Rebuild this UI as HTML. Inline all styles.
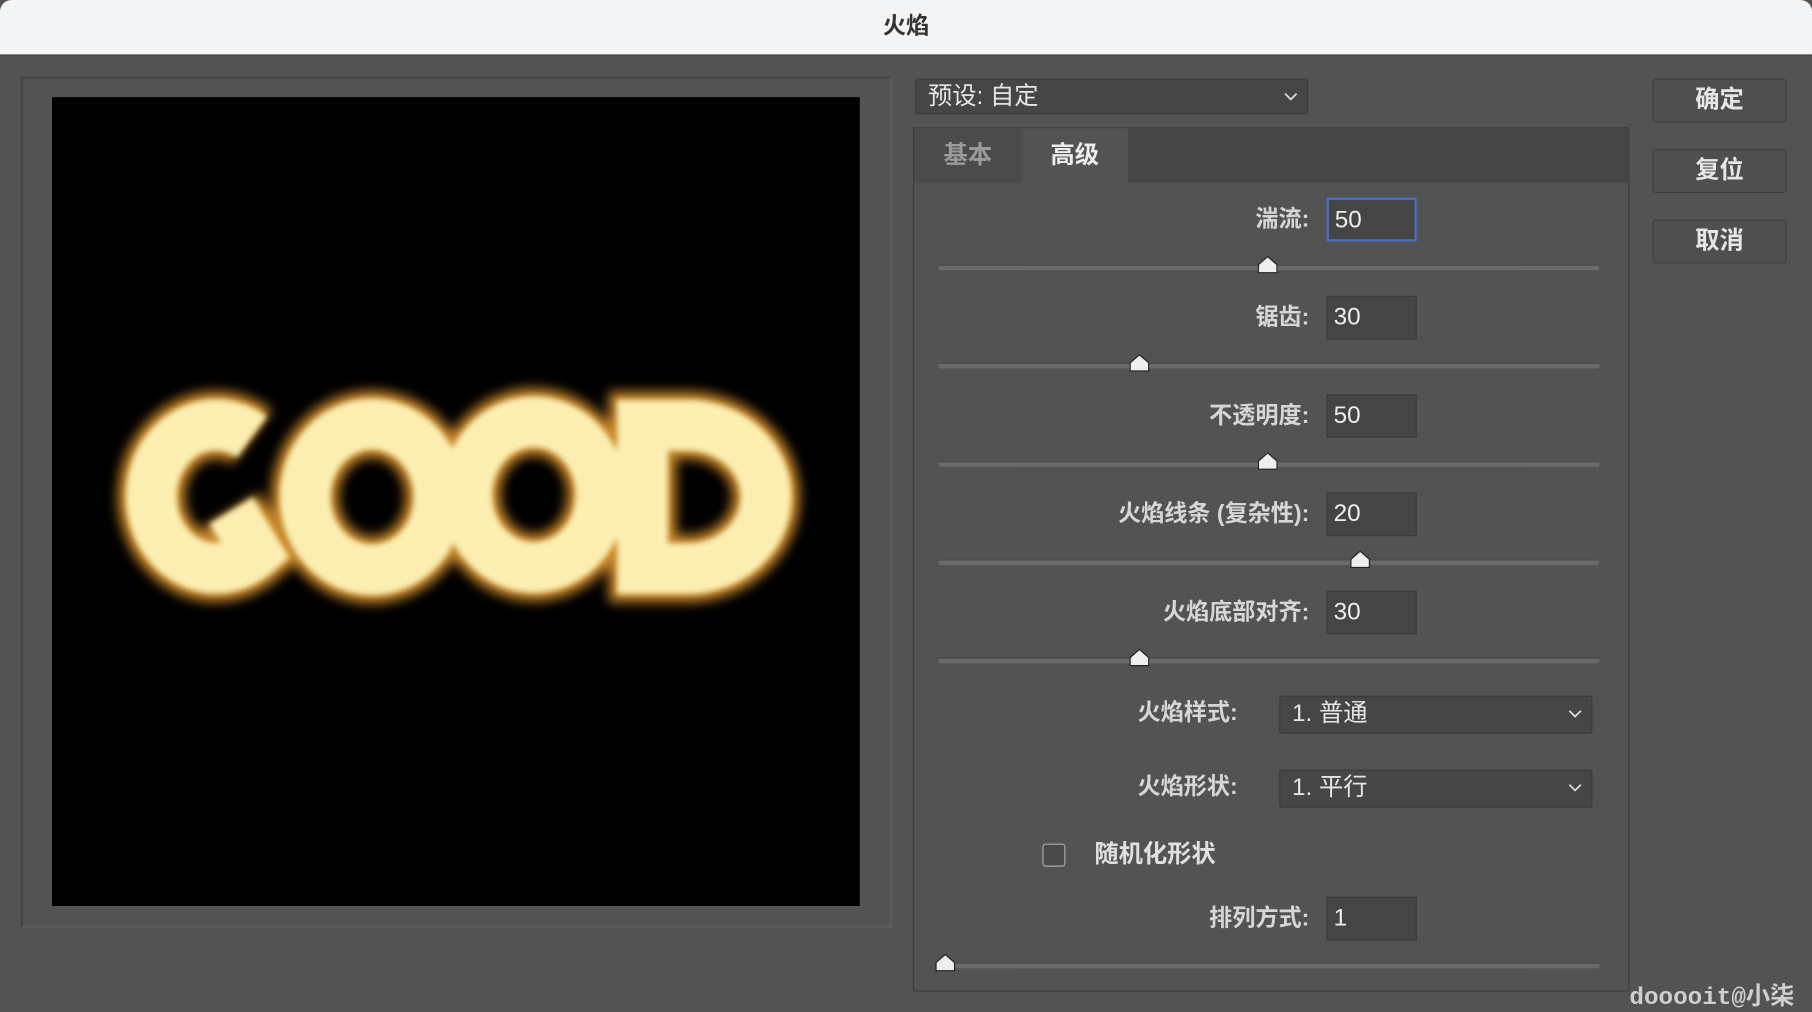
<!DOCTYPE html>
<html><head><meta charset="utf-8"><style>
html,body{margin:0;padding:0;width:1812px;height:1012px;overflow:hidden;background:#535353}
#w{position:absolute;left:0;top:0;width:1568px;height:876px;transform:scale(1.15561);transform-origin:0 0;background:#535353;font-family:"Liberation Sans","Noto Sans CJK SC",sans-serif;color:#d8d8d8}
.a{position:absolute;box-sizing:border-box}
.tb{left:0;top:0;width:1568px;height:48px;background:#f3f4f6;border-radius:10px 10px 0 0;border-bottom:1px solid #3a3a3a;text-align:center;line-height:46px;font-size:20px;font-weight:bold;color:#333}
.lbl{font-size:20px;text-align:right;color:#d6d6d6;line-height:38px;font-weight:bold}
.inp{width:78px;height:38px;background:#454545;border:1px solid #3c3c3c;font-size:21px;color:#eee;padding-left:5px;line-height:36px}
.trk{left:812px;width:572px;height:5px;background:#6a6a6a;border-radius:2px;border-top:1px solid #4a4a4a}
.th{width:0;height:0}
.th svg{position:absolute;left:-9px;top:-10px}
.btn{left:1430px;width:116px;height:38px;background:#4f4f4f;border:1px solid #3f3f3f;border-radius:3px;text-align:center;line-height:36px;font-size:21px;font-weight:bold;color:#e6e6e6}
.dd{background:#464646;border:1px solid #3a3a3a;border-radius:2px;font-size:21px;color:#e6e6e6;padding-left:10px;line-height:30px}
.dd svg{position:absolute;right:8px;top:11px}
</style></head><body><div id="w">
<div class="a tb">火焰</div>
<div class="a" style="left:18px;top:66px;width:754px;height:737px;border:2px solid #444;border-bottom-color:#5c5c5c;border-right-color:#5c5c5c"></div>
<div class="a" style="left:45px;top:84px;width:699px;height:700px;background:#000">
<svg width="699" height="700" viewBox="45 84 699 700">
<defs><filter id="b" x="-50%" y="-50%" width="200%" height="200%"><feGaussianBlur stdDeviation="5"/></filter><filter id="b2" x="-50%" y="-50%" width="200%" height="200%"><feGaussianBlur stdDeviation="2.5"/></filter></defs>
<g filter="url(#b)" fill="none" stroke="#c8862a" stroke-width="58">
<path d="M218 378 A56 62 0 1 0 222 478 L200 442"/>
<ellipse cx="322" cy="430" rx="58" ry="63"/>
<ellipse cx="462" cy="428" rx="58" ry="63"/>
<path d="M556 368 L595 368 A68 62 0 0 1 595 492 L556 492 Z"/>
</g>
<g filter="url(#b2)" fill="none" stroke="#fbeeb0" stroke-width="44">
<path d="M218 378 A56 62 0 1 0 222 478 L200 442"/>
<ellipse cx="322" cy="430" rx="58" ry="63"/>
<ellipse cx="462" cy="428" rx="58" ry="63"/>
<path d="M556 368 L595 368 A68 62 0 0 1 595 492 L556 492 Z"/>
</g>
</svg></div>
<div class="a dd" style="left:792px;top:68px;width:340px;height:31px">预设: 自定<svg width="12" height="8"><path d="M1 1L6 6 11 1" stroke="#ddd" stroke-width="1.5" fill="none"/></svg></div>
<div class="a" style="left:790px;top:110px;width:620px;height:748px;background:#535353;border:1px solid #3e3e3e"></div>
<div class="a" style="left:791px;top:111px;width:618px;height:47px;background:#464646"></div>
<div class="a" style="left:791px;top:111px;width:93px;height:47px;background:#4b4b4b;font-size:21px;color:#9a9a9a;text-align:center;line-height:47px;font-weight:bold">基本</div>
<div class="a" style="left:884px;top:111px;width:92px;height:48px;background:#535353;font-size:21px;color:#eee;text-align:center;line-height:47px;font-weight:bold">高级</div>

<div class="a lbl" style="left:800px;top:171px;width:333px">湍流:</div>
<div class="a inp" style="left:1148px;top:171px;border:2px solid #4c6fc4">50</div>
<div class="a trk" style="top:229px"></div>
<div class="a th" style="left:1097px;top:231px"><svg width="18" height="16"><path d="M1 15V8L9 1 17 8V15Z" fill="#eee" stroke="#222"/></svg></div>

<div class="a lbl" style="left:800px;top:256px;width:333px">锯齿:</div>
<div class="a inp" style="left:1148px;top:256px">30</div>
<div class="a trk" style="top:314px"></div>
<div class="a th" style="left:986px;top:316px"><svg width="18" height="16"><path d="M1 15V8L9 1 17 8V15Z" fill="#eee" stroke="#222"/></svg></div>

<div class="a lbl" style="left:800px;top:341px;width:333px">不透明度:</div>
<div class="a inp" style="left:1148px;top:341px">50</div>
<div class="a trk" style="top:399px"></div>
<div class="a th" style="left:1097px;top:401px"><svg width="18" height="16"><path d="M1 15V8L9 1 17 8V15Z" fill="#eee" stroke="#222"/></svg></div>

<div class="a lbl" style="left:800px;top:426px;width:333px">火焰线条 (复杂性):</div>
<div class="a inp" style="left:1148px;top:426px">20</div>
<div class="a trk" style="top:484px"></div>
<div class="a th" style="left:1177px;top:486px"><svg width="18" height="16"><path d="M1 15V8L9 1 17 8V15Z" fill="#eee" stroke="#222"/></svg></div>

<div class="a lbl" style="left:800px;top:511px;width:333px">火焰底部对齐:</div>
<div class="a inp" style="left:1148px;top:511px">30</div>
<div class="a trk" style="top:569px"></div>
<div class="a th" style="left:986px;top:571px"><svg width="18" height="16"><path d="M1 15V8L9 1 17 8V15Z" fill="#eee" stroke="#222"/></svg></div>

<div class="a lbl" style="left:800px;top:598px;width:271px">火焰样式:</div>
<div class="a dd" style="left:1107px;top:602px;width:271px;height:33px">1. 普通<svg width="12" height="8"><path d="M1 1L6 6 11 1" stroke="#ddd" stroke-width="1.5" fill="none"/></svg></div>
<div class="a lbl" style="left:800px;top:662px;width:271px">火焰形状:</div>
<div class="a dd" style="left:1107px;top:666px;width:271px;height:33px">1. 平行<svg width="12" height="8"><path d="M1 1L6 6 11 1" stroke="#ddd" stroke-width="1.5" fill="none"/></svg></div>

<div class="a" style="left:902px;top:730px;width:20px;height:20px;border:1px solid #aaa;border-radius:3px;background:#4a4a4a"></div>
<div class="a lbl" style="left:947px;top:721px;text-align:left;font-size:21px;color:#e0e0e0">随机化形状</div>

<div class="a lbl" style="left:800px;top:776px;width:333px">排列方式:</div>
<div class="a inp" style="left:1148px;top:776px">1</div>
<div class="a trk" style="top:833px"></div>
<div class="a th" style="left:818px;top:835px"><svg width="18" height="16"><path d="M1 15V8L9 1 17 8V15Z" fill="#eee" stroke="#222"/></svg></div>

<div class="a btn" style="top:68px">确定</div>
<div class="a btn" style="top:129px">复位</div>
<div class="a btn" style="top:190px">取消</div>
<div class="a" style="left:1410px;top:846px;font-family:'Liberation Mono','Noto Sans CJK SC',monospace;font-size:21px;font-weight:bold;color:#cfcfcf">dooooit@小柒</div>
</div></body></html>
